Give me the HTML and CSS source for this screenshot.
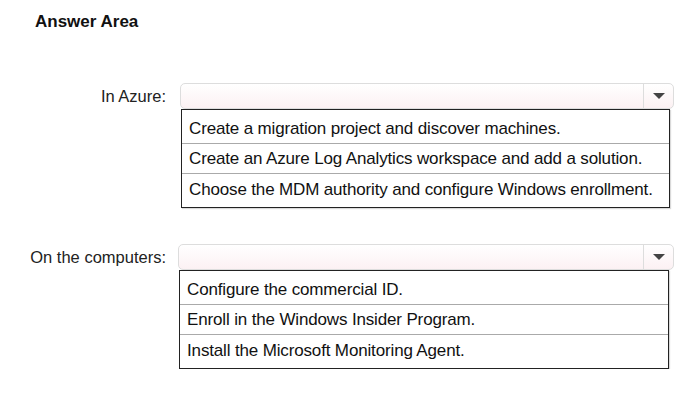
FILE: index.html
```html
<!DOCTYPE html>
<html lang="en">
<head>
    <meta charset="UTF-8">
    <meta name="viewport" content="width=device-width, initial-scale=1.0">
    <title>Answer Area</title>
    <link rel="stylesheet" href="styles.css">
</head>
<body>

<div class="answer-area">
    <h1>Answer Area</h1>

    <!-- First drop-down -->
    <div class="question first">
        <div class="label">In Azure:</div>
        <div class="field">
            <div class="select"><span class="arrow-box"><span class="arrow"></span></span></div>
            <ul class="options">
                <li>Create a migration project and discover machines.</li>
                <li>Create an Azure Log Analytics workspace and add a solution.</li>
                <li>Choose the MDM authority and configure Windows enrollment.</li>
            </ul>
        </div>
    </div>

    <!-- Second drop-down -->
    <div class="question second">
        <div class="label">On the computers:</div>
        <div class="field">
            <div class="select"><span class="arrow-box"><span class="arrow"></span></span></div>
            <ul class="options">
                <li>Configure the commercial ID.</li>
                <li>Enroll in the Windows Insider Program.</li>
                <li>Install the Microsoft Monitoring Agent.</li>
            </ul>
        </div>
    </div>
</div>

</body>
</html>
```

FILE: styles.css
```css
body {
    margin: 0;
    padding: 0;
    background: #fff;
    color: #111;
    font-family: "Liberation Sans", Arial, sans-serif;
}

.answer-area {
    padding-top: 11px;
}

h1 {
    font-size: 17px;
    font-weight: bold;
    line-height: 22px;
    margin: 0 0 50px 35px;
}

.question {
    display: flex;
    align-items: flex-start;
}

.question.second {
    margin-top: 36px;
}

.label {
    width: 166px;
    text-align: right;
    font-size: 16.5px;
    line-height: 26px;
    color: #222;
}

.field {
    width: 494px;
    margin-left: 14px;
}

.question.second .field {
    margin-left: 12px;
    width: 496px;
}

.select {
    height: 24px;
    border: 1px solid #ddd;
    border-radius: 5px;
    background: linear-gradient(#fff, #fcf1f3);
    display: flex;
    justify-content: flex-end;
}

.arrow-box {
    width: 29px;
    border-left: 1px solid #ddd;
    display: flex;
    align-items: center;
    justify-content: center;
}

.arrow {
    width: 0;
    height: 0;
    border-left: 6px solid transparent;
    border-right: 6px solid transparent;
    border-top: 6px solid #444;
}

.options {
    list-style: none;
    margin: 0 4px 0 1px;
    padding: 4px 0 2px;
    border: 1px solid #222;
    box-shadow: 1px 1px 1px rgba(0, 0, 0, 0.15);
}

.question.second .options {
    margin-right: 5px;
}

.options li {
    font-size: 17px;
    line-height: 29px;
    padding-left: 7px;
    border-bottom: 1px solid #aaa;
    color: #111;
    letter-spacing: -0.15px;
}

.options li:last-child {
    border-bottom: none;
    line-height: 31px;
}
```
